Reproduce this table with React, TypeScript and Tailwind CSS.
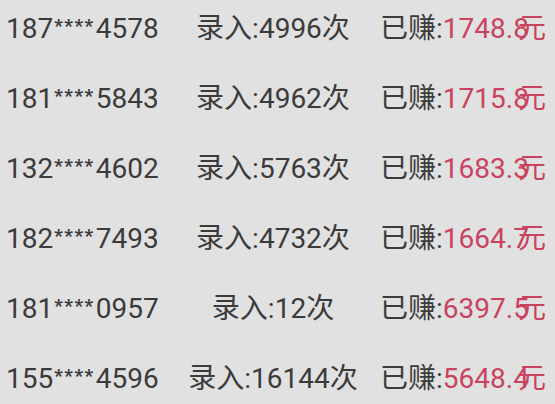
const ROWS = [
  { phone: ["187", "4578"], count: "4996", amount: "1748.8" },
  { phone: ["181", "5843"], count: "4962", amount: "1715.8" },
  { phone: ["132", "4602"], count: "5763", amount: "1683.3" },
  { phone: ["182", "7493"], count: "4732", amount: "1664.7" },
  { phone: ["181", "0957"], count: "12", amount: "6397.5" },
  { phone: ["155", "4596"], count: "16144", amount: "5648.4" },
];

export default function App() {
  return (
    <div
      className="w-[555px] h-[404px] overflow-hidden bg-[#e1e1e1] text-[#3b3b3b] text-[28px] leading-none"
      style={{ fontFamily: "Roboto, 'Noto Sans CJK SC', sans-serif" }}
    >
      <div className="-mt-1.5 flex flex-col">
        {ROWS.map((row, i) => (
          <div key={i} className="flex h-[70px] items-center whitespace-nowrap">
            <span className="w-[180px] pl-[6px]">
              {row.phone[0]}
              <span className="relative -top-[6px] px-[1px] text-[19px] font-bold tracking-[1.5px]">****</span>
              {row.phone[1]}
            </span>
            <span className="w-[186px] text-center">
              录入:{row.count}次
            </span>
            <span className="pl-[14px]">
              已赚:
              <span className="text-[#c9435f]">
                {row.amount}
                <span className="-ml-[11px]">元</span>
              </span>
            </span>
          </div>
        ))}
      </div>
    </div>
  );
}
